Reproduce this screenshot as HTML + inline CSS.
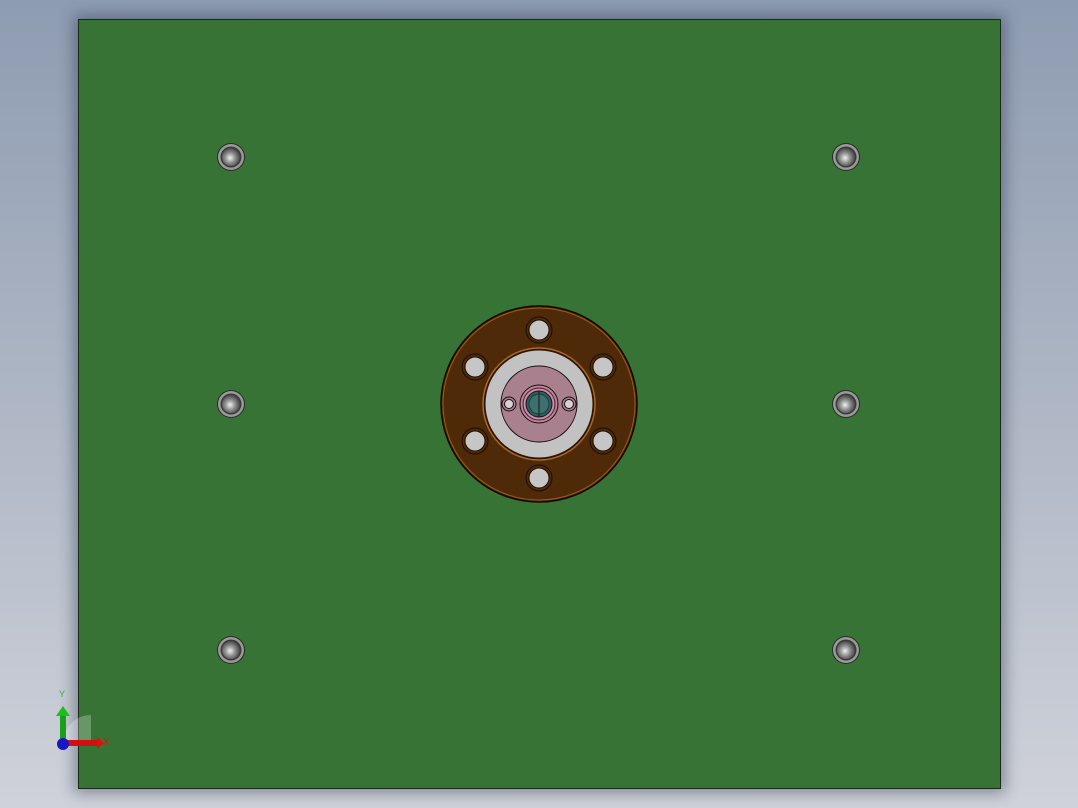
<!DOCTYPE html>
<html><head><style>
html,body{margin:0;padding:0;}
body{width:1078px;height:808px;overflow:hidden;background:linear-gradient(#8e9cb1,#b5bcc9 60%,#cfd2da);position:relative;}
#p{position:absolute;left:78px;top:19px;width:921px;height:768px;background:#377334;border:1px solid #1a2a1a;box-shadow:0 0 14px 4px rgba(40,50,70,0.45);}
svg{position:absolute;left:0;top:0;}
</style></head><body>
<div id="p"></div>
<svg width="1078" height="808">
<defs>
<radialGradient id="s" cx="0.45" cy="0.55" r="0.6"><stop offset="0" stop-color="#f0f0f0"/><stop offset="0.5" stop-color="#8a8a8a"/><stop offset="1" stop-color="#3a3a3a"/></radialGradient>
<g id="scr"><circle r="14" fill="#2a2a2a"/><circle r="13" fill="#9a9a9a"/><circle r="10.5" fill="#3a3a3a"/><circle r="9" fill="url(#s)"/></g>
<g id="h"><circle r="13" fill="none" stroke="#1a0c02" stroke-width="1"/><circle r="10" fill="#c6c6c6" stroke="#1a0c02"/></g>
</defs>
<use href="#scr" x="231" y="157"/><use href="#scr" x="846" y="157"/>
<use href="#scr" x="231" y="404"/><use href="#scr" x="846" y="404"/>
<use href="#scr" x="231" y="650"/><use href="#scr" x="846" y="650"/>
<g transform="translate(539,404)">
<circle r="98" fill="#4e2a08" stroke="#120800" stroke-width="1.5"/>
<circle r="96" fill="none" stroke="#a05a18" stroke-width="1"/>
<use href="#h" x="0" y="-74"/><use href="#h" x="0" y="74"/>
<use href="#h" x="-64" y="-37"/><use href="#h" x="64" y="-37"/>
<use href="#h" x="-64" y="37"/><use href="#h" x="64" y="37"/>
<circle r="56" fill="#2a1404" stroke="#b06820" stroke-width="1.5"/>
<circle r="53.5" fill="#c2c2c2"/>
<circle r="38" fill="#a8808e" stroke="#1a0c10"/>
<circle cx="-30" r="7" fill="none" stroke="#1a0c10"/><circle cx="-30" r="4.5" fill="#d8d0d4" stroke="#1a0c10"/>
<circle cx="30" r="7" fill="none" stroke="#1a0c10"/><circle cx="30" r="4.5" fill="#d8d0d4" stroke="#1a0c10"/>
<circle r="19" fill="#b88898" stroke="#1a0c10"/>
<circle r="16" fill="#c890a8" stroke="#5a1030"/>
<circle r="13" fill="#2e6060" stroke="#101818"/>
<circle r="10" fill="#3e7070" stroke="#203838"/>
<line x1="0" y1="-13" x2="0" y2="13" stroke="#101818"/>
</g>
<g>
<path d="M63 743 A28 28 0 0 1 91 715 L91 743Z" fill="rgba(255,255,255,0.25)"/>
<rect x="60" y="714" width="6" height="28" fill="#18a018"/>
<path d="M56 716 L63 706 L70 716Z" fill="#18c018"/>
<rect x="64" y="740" width="34" height="6" fill="#d01010"/>
<path d="M97 737 L104 743 L97 749Z" fill="#e01010"/>
<circle cx="63" cy="744" r="6" fill="#1818c0"/>
<text x="59" y="697" font-family="Liberation Sans,sans-serif" font-size="9" fill="#20c020">Y</text>
<text x="103" y="745" font-family="Liberation Sans,sans-serif" font-size="9" fill="#e01010">X</text>
</g>
</svg>
</body></html>
